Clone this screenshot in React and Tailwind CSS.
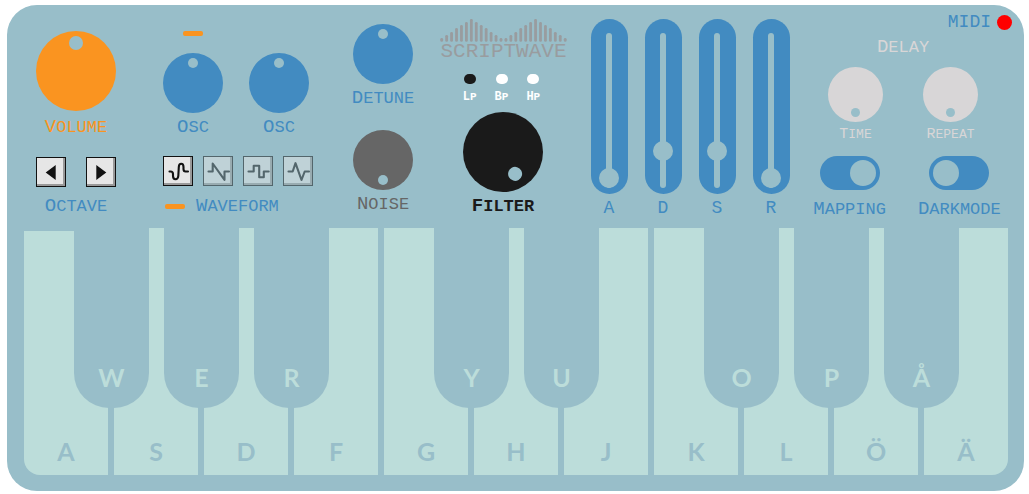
import { useState } from "react";

const label = 'block font-["Liberation_Mono",monospace] text-[17px] leading-5 uppercase first-letter:text-[19px] whitespace-nowrap';
const smallLabel = 'block font-["Liberation_Mono",monospace] text-[13px] leading-4 uppercase first-letter:text-[15px] whitespace-nowrap';
const fullLabel = 'block font-["Liberation_Mono",monospace] text-lg leading-5 uppercase whitespace-nowrap';

function Knob({ id, name, size, dot, color, angle = 0, text = label, textColor, gap }) {
  const [turn, setTurn] = useState(angle);
  return (
    <div className={`flex flex-col items-center ${gap}`}>
      <div className={`relative rounded-full ${size} ${color}`}>
        <div className="absolute inset-0 flex justify-center pt-[5px]" style={{ transform: `rotate(${turn}deg)` }}>
          <span className={`rounded-full bg-[#98bec9] ${dot}`} />
        </div>
        <input
          id={id}
          type="range"
          min="-180"
          max="180"
          value={turn}
          onChange={(e) => setTurn(Number(e.target.value))}
          className="absolute inset-0 size-full cursor-pointer opacity-0"
        />
      </div>
      <label htmlFor={id} className={`${text} ${textColor}`}>{name}</label>
    </div>
  );
}

function Fader({ name, value }) {
  const id = `fader-${name}`;
  return (
    <div className="flex flex-col items-center gap-1">
      <div className="grid h-[175px] w-[37px] place-items-center rounded-full bg-[#428bc1] pt-2">
        <span className="col-start-1 row-start-1 h-[155px] w-[6px] rounded-full bg-[#98bec9]" />
        <input
          id={id}
          type="range"
          defaultValue={value}
          className="col-start-1 row-start-1 h-[155px] w-5 cursor-pointer appearance-none bg-transparent [direction:rtl] [writing-mode:vertical-lr] [&::-webkit-slider-thumb]:size-5 [&::-webkit-slider-thumb]:appearance-none [&::-webkit-slider-thumb]:rounded-full [&::-webkit-slider-thumb]:bg-[#98bec9]"
        />
      </div>
      <label htmlFor={id} className={`${fullLabel} text-[#428bc1]`}>{name}</label>
    </div>
  );
}

function Toggle({ id, name, on }) {
  return (
    <div className="flex flex-col items-center gap-[9px]">
      <input
        id={id}
        type="checkbox"
        role="switch"
        defaultChecked={on}
        className="flex h-[34px] w-[60px] cursor-pointer appearance-none rounded-full bg-[#428bc1] p-1 before:size-[26px] before:rounded-full before:bg-[#98bec9] checked:justify-end"
      />
      <label htmlFor={id} className={`${label} text-[#428bc1]`}>{name}</label>
    </div>
  );
}

function SquareButton({ name, dim, pressed, onClick, children }) {
  return (
    <button
      type="button"
      aria-label={name}
      aria-pressed={pressed}
      onClick={onClick}
      className={`size-[30px] cursor-pointer border border-[#111] bg-[#e6e6e6] shadow-[inset_-2px_-2px_0_#999] ${dim ? "opacity-50" : ""}`}
    >
      <svg viewBox="1 1 28 28" className="size-7" aria-hidden="true">{children}</svg>
    </button>
  );
}

const waves = [
  ["Sine", "M6.5 15.5H7.5Q10 15.5 10 18V20Q10 23.2 12.5 23.2Q15 23.2 15.3 20L15.8 11Q16 7.8 18.2 7.8Q20.5 7.8 20.5 11V13Q20.5 15.5 22.5 15.5H25"],
  ["Sawtooth", "M5.5 15.5H9.7V7.5L21.5 23.8V15.5H26"],
  ["Square", "M5.5 15.5H10.7V9.7H16.2V21.3H20.8V15.5H25.7"],
  ["Triangle", "M5.5 15.5H9.7L12.5 7.2L18.5 24L21.7 15.5H26"],
];

function Waveforms() {
  const [active, setActive] = useState("Sine");
  return (
    <div className="flex gap-[10px]">
      {waves.map(([name, d]) => (
        <SquareButton key={name} name={name} dim={active !== name} pressed={active === name} onClick={() => setActive(name)}>
          <path d={d} fill="none" stroke="#111" strokeWidth="2.1" strokeLinecap="round" strokeLinejoin="round" />
        </SquareButton>
      ))}
    </div>
  );
}

const bars = [4, 7, 10, 14, 17, 20, 23, 20, 17, 14, 10, 7, 4];

function Logo() {
  return (
    <div className="flex flex-col items-center gap-px text-[#999c9f]">
      <svg viewBox="0 0 127 23" className="h-[23px] w-[127px]" aria-hidden="true">
        {[...bars, ...bars].map((h, i) => (
          <line key={i} x1={1.7 + i * 4.94} x2={1.7 + i * 4.94} y1={24.3 - h} y2="21.4" stroke="currentColor" strokeWidth="2.8" strokeLinecap="round" />
        ))}
      </svg>
      <h1 className='font-["Liberation_Mono",monospace] text-[21px] leading-[18px]'>SCRIPTWAVE</h1>
    </div>
  );
}

function FilterType({ name, checked }) {
  return (
    <label className='flex flex-col items-center gap-[5px] font-["Liberation_Mono",monospace] text-[11px] leading-4 font-bold text-white uppercase'>
      <input
        type="radio"
        name="filter"
        defaultChecked={checked}
        className="h-[10px] w-3 cursor-pointer appearance-none rounded-[5px] bg-white checked:bg-[#1a1a1a]"
      />
      <span className="block first-letter:text-[12px]">{name}</span>
    </label>
  );
}

const keys = [
  ["A", "W"], ["S", "E"], ["D", "R"], ["F"], ["G", "Y"], ["H", "U"],
  ["J"], ["K", "O"], ["L", "P"], ["Ö", "Å"], ["Ä"],
];

function Keyboard() {
  return (
    <div className="flex h-[247px] gap-[6px] pr-4 pl-[17px] font-[Lato,sans-serif] text-[25px] leading-7 font-bold">
      {keys.map(([white, black]) => (
        <div key={white} className="group relative flex flex-1 first:pt-[3px]">
          <button
            type="button"
            className="flex flex-1 cursor-pointer items-end justify-center bg-[#bcddda] pb-[10px] text-[#98bec9] group-first:rounded-bl-2xl group-last:rounded-br-2xl"
          >
            {white}
          </button>
          {black && (
            <button
              type="button"
              className="absolute -right-[41px] bottom-[67px] z-10 flex h-[180px] w-[75px] cursor-pointer items-end justify-center rounded-b-[35px] bg-[#98bec9] pb-[17px] text-[#bcddda]"
            >
              {black}
            </button>
          )}
        </div>
      ))}
    </div>
  );
}

export default function App() {
  return (
    <div className="min-h-screen bg-white pt-[5px] pr-[5px] pl-[7px]">
      <main className="rounded-[30px] bg-[#98bec9] pb-4">
        <div className="grid h-[223px] grid-cols-[minmax(0,138fr)_minmax(0,186fr)_minmax(0,104fr)_minmax(0,137fr)_minmax(0,236fr)_minmax(0,216fr)]">
          <section className="flex flex-col items-center pt-[26px]">
            <Knob id="volume" name="Volume" size="size-20" dot="size-[14px]" color="bg-[#fa9420]" textColor="text-[#fa9420]" gap="gap-[6px]" />
            <div className="mt-[19px] flex gap-5">
              <SquareButton name="Octave down"><path d="M9.7 15.5L19.7 8V23Z" fill="#111" /></SquareButton>
              <SquareButton name="Octave up"><path d="M20.3 15.5L10.3 8V23Z" fill="#111" /></SquareButton>
            </div>
            <span className={`${label} mt-[9px] text-[#428bc1]`}>Octave</span>
          </section>

          <section className="flex flex-col items-center pt-[26px]">
            <div className="flex w-[150px] flex-col">
              <span className="ml-5 h-[5px] w-5 rounded-xs bg-[#fa9420]" />
              <div className="mt-[17px] flex gap-[26px]">
                <Knob id="osc-1" name="Osc" size="size-[60px]" dot="size-[10px]" color="bg-[#428bc1]" textColor="text-[#428bc1]" gap="gap-1" />
                <Knob id="osc-2" name="Osc" size="size-[60px]" dot="size-[10px]" color="bg-[#428bc1]" textColor="text-[#428bc1]" gap="gap-1" />
              </div>
              <div className="mt-[18px]"><Waveforms /></div>
              <div className="mt-[10px] flex items-center gap-[11px] pl-[2px]">
                <span className="h-[5px] w-5 rounded-xs bg-[#fa9420]" />
                <span className={`${label} text-[#428bc1]`}>Waveform</span>
              </div>
            </div>
          </section>

          <section className="flex flex-col items-center gap-[21px] pt-[19px]">
            <Knob id="detune" name="Detune" size="size-[60px]" dot="size-[10px]" color="bg-[#428bc1]" textColor="text-[#428bc1]" gap="gap-1" />
            <Knob id="noise" name="Noise" size="size-[60px]" dot="size-[10px]" color="bg-[#666]" textColor="text-[#666]" gap="gap-1" angle={180} />
          </section>

          <section className="flex flex-col items-center pt-[14px]">
            <Logo />
            <div className="mt-[13px] flex gap-[18px] pr-1">
              <FilterType name="Lp" checked />
              <FilterType name="Bp" />
              <FilterType name="Hp" />
            </div>
            <div className="mt-[7px] pr-px">
              <Knob id="cutoff" name="Filter" size="size-20" dot="mt-[3px] size-[14px]" color="bg-[#1a1a1a]" textColor="font-bold text-[#1a1a1a]" gap="gap-1" angle={151} />
            </div>
          </section>

          <section className="flex justify-center gap-[17px] pt-[14px]">
            <Fader name="A" value={0} />
            <Fader name="D" value={20} />
            <Fader name="S" value={20} />
            <Fader name="R" value={0} />
          </section>

          <section className="flex flex-col pt-[7px]">
            <div className="flex items-center justify-end gap-[6px] pr-3">
              <span className={`${fullLabel} text-[#428bc1]`}>MIDI</span>
              <span className="size-[15px] rounded-full bg-[#f00]" />
            </div>
            <div className="mt-[5px] flex flex-col items-center pr-[26px]">
              <h2 className={`${label} text-[#d8d6d7]`}>Delay</h2>
              <div className="mt-[9px] flex gap-10">
                <div className="flex w-[55px] justify-center">
                  <Knob id="time" name="Time" size="size-[55px]" dot="size-[9px]" color="bg-[#d8d6d7]" text={smallLabel} textColor="text-[#d8d6d7]" gap="gap-[5px]" angle={180} />
                </div>
                <div className="flex w-[55px] justify-center">
                  <Knob id="repeat" name="Repeat" size="size-[55px]" dot="size-[9px]" color="bg-[#d8d6d7]" text={smallLabel} textColor="text-[#d8d6d7]" gap="gap-[5px]" angle={180} />
                </div>
              </div>
              <div className="mt-[13px] flex gap-8 pl-2">
                <Toggle id="mapping" name="Mapping" on />
                <Toggle id="darkmode" name="Darkmode" />
              </div>
            </div>
          </section>
        </div>
        <Keyboard />
      </main>
    </div>
  );
}
